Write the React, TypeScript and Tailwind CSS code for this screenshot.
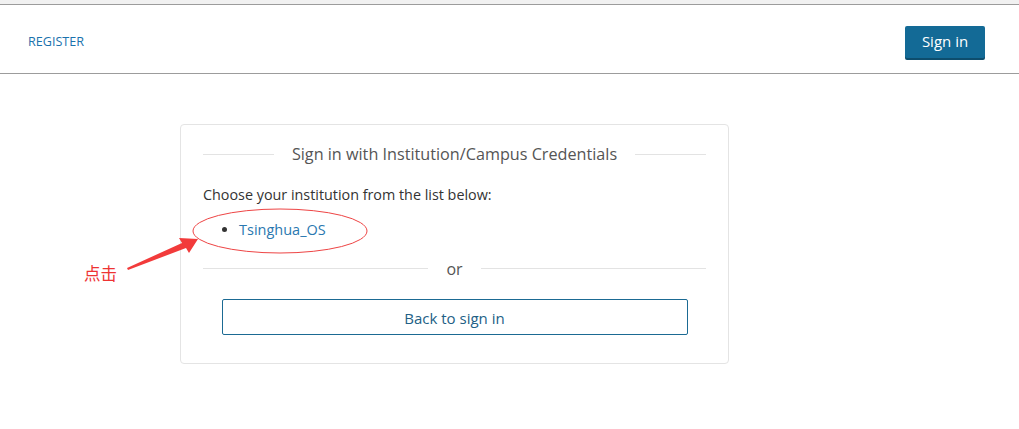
import React from 'react'

const font = { fontFamily: '"Open Sans", "Noto Sans CJK SC", sans-serif' }

function Divider({ label, className }: { label: string; className?: string }) {
  return (
    <div className={`flex items-center ${className ?? ''}`}>
      <div className="h-px flex-1 bg-[#e3e3e3]" />
      <span className="px-[18px] text-[#555]">{label}</span>
      <div className="h-px flex-1 bg-[#e3e3e3]" />
    </div>
  )
}

export default function App() {
  return (
    <div className="relative min-h-[429px] bg-white" style={font}>
      <div className="h-[4px] bg-[#f1f1f1]" />
      <header className="flex h-[70px] items-center justify-between border-y border-[#9c9c9c] pl-[28px] pr-[34px] pt-[5px]">
        <a className="pt-[2px] text-[12.6px] text-[#1a72ad]">REGISTER</a>
        <button className="h-[32px] w-[80px] rounded-[2px] bg-[#136a96] text-[15px] text-white shadow-[0_2px_0_#0d4d6d]">
          Sign in
        </button>
      </header>

      <div className="ml-[180px] mt-[50px] w-[549px] rounded-[4px] border border-[#e4e4e4] px-[22px] pb-[28px] pt-[17px]">
        <Divider label="Sign in with Institution/Campus Credentials" className="text-[16.2px]" />
        <p className="mt-[18px] text-[14.35px] text-[#333]">Choose your institution from the list below:</p>
        <ul className="mt-[13px] list-disc pl-[36px] text-[14.5px] text-[#333]">
          <li>
            <a className="text-[#2a78b0]">Tsinghua_OS</a>
          </li>
        </ul>
        <Divider label="or" className="mt-[16px] text-[16px]" />
        <button className="mx-auto mt-[18px] flex h-[36px] w-[466px] items-center justify-center rounded-[2px] border border-[#1b6a93] pt-[3px] text-[15px] text-[#235f86]">
          Back to sign in
        </button>
      </div>

      {/* annotation overlay */}
      <svg className="absolute left-0 top-0" width="1019" height="429">
        <ellipse cx="280" cy="231" rx="87" ry="22" fill="none" stroke="#ee4444" strokeWidth="1" />
        <polygon points="127,268 182,243 179,238 198,239 189,253 186,248 128,270" fill="#f23b3b" />
      </svg>
      <span className="absolute left-[84px] top-[261px] text-[16.5px] text-[#ee3333]" style={{ fontFamily: '"Noto Sans CJK SC", sans-serif' }}>
        点击
      </span>
    </div>
  )
}
